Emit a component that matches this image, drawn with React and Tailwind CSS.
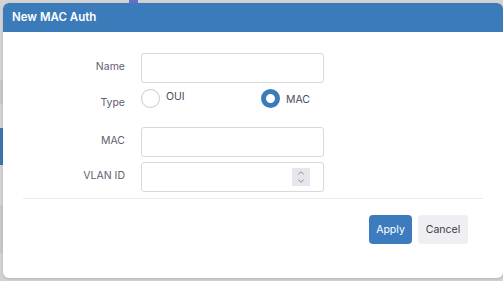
import { ChevronUp, ChevronDown } from 'lucide-react';

function Label({ children, className = '' }) {
  return (
    <div className={`-ml-5 w-[122px] shrink-0 text-right text-[10.5px] text-[#5f6070] ${className}`}>
      {children}
    </div>
  );
}

function Radio({ checked, label, className = '' }) {
  return (
    <label className={`flex items-center gap-[6px] ${className}`}>
      {checked ? (
        <span className="block h-[19px] w-[19px] rounded-full border-[5px] border-[#3c7bb9] bg-white" />
      ) : (
        <span className="block h-[19px] w-[19px] rounded-full border border-[#c9c9c9] bg-white" />
      )}
      <span className={`text-[10.5px] text-[#4a4b5c] ${checked ? 'translate-y-[1px]' : '-translate-y-[2px]'}`}>
        {label}
      </span>
    </label>
  );
}

export default function App() {
  return (
    <div
      className="relative h-[281px] w-[503px] overflow-hidden bg-[#d3d3d3] pl-[3px] pt-[3px]"
      style={{ fontFamily: 'Inter, "Open Sans", sans-serif' }}
    >
      {/* page behind the overlay */}
      <div className="absolute left-[129px] top-0 h-[3px] w-[9px] bg-[#6a6fcf]" />
      <div className="absolute left-0 top-[80px] h-[24px] w-[3px] bg-[#c8c8c8]" />
      <div className="absolute left-0 top-[128px] h-[37px] w-[3px] bg-[#3c76ad]" />
      <div className="absolute left-0 top-[205px] h-[48px] w-[3px] bg-[#c9c9c9]" />

      <div className="relative flex h-[275px] w-[500px] flex-col overflow-hidden rounded-[6px] bg-white shadow-[0_1px_3px_rgba(0,0,0,0.15)]">
        <div className="flex h-[29px] shrink-0 items-center bg-[#3c7bb9] pl-[9px]">
          <span className="text-[11.5px] font-semibold text-white">New MAC Auth</span>
        </div>

        <div className="flex flex-col px-5 pt-[21px]">
          <div className="flex items-center">
            <Label className="-translate-y-[1px]">Name</Label>
            <div className="ml-4 h-[30px] w-[183px] rounded-[3px] border border-[#d9d9d9]" />
          </div>

          <div className="mt-[6px] flex h-[19px] items-center">
            <Label className="translate-y-[4px]">Type</Label>
            <div className="ml-4 flex items-center">
              <Radio label="OUI" className="w-[120px]" />
              <Radio checked label="MAC" />
            </div>
          </div>

          <div className="mt-[19px] flex items-center">
            <Label className="-translate-y-[1px]">MAC</Label>
            <div className="ml-4 h-[30px] w-[183px] rounded-[3px] border border-[#d9d9d9]" />
          </div>

          <div className="mt-[5px] flex items-center">
            <Label className="-translate-y-[1px]">VLAN ID</Label>
            <div className="ml-4 flex h-[30px] w-[183px] items-center justify-end rounded-[3px] border border-[#d9d9d9] pr-[13px]">
              <div className="flex h-[18px] w-[18px] flex-col items-center justify-center bg-[#e6e6ec] text-[#6f7080]">
                <ChevronUp size={10} strokeWidth={1.8} className="-mb-[1px]" />
                <ChevronDown size={10} strokeWidth={1.8} className="-mt-[1px]" />
              </div>
            </div>
          </div>

          <div className="mt-[6px] h-px w-full bg-[#ececec]" />

          <div className="mr-[15px] mt-4 flex justify-end gap-[6px]">
            <button className="h-[29px] w-[43px] rounded-[4px] bg-[#3c7bbd] text-[10.5px] text-white">
              Apply
            </button>
            <button className="h-[29px] w-[50px] rounded-[4px] bg-[#efeff3] text-[10.5px] text-[#3a3b4a]">
              Cancel
            </button>
          </div>
        </div>
      </div>
    </div>
  );
}
